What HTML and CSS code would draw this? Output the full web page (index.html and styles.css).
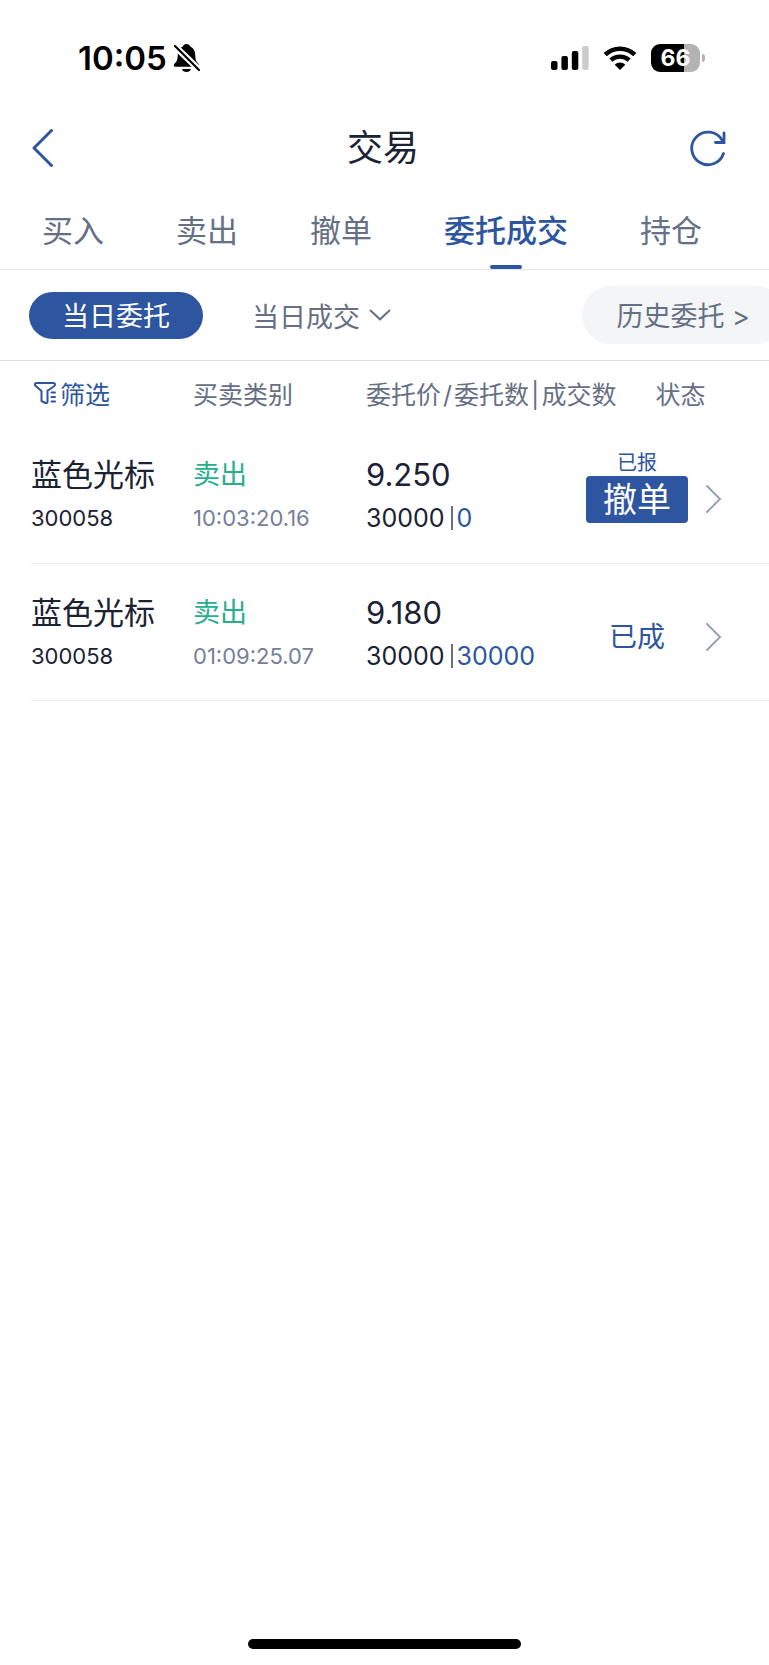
FILE: index.html
```html
<!DOCTYPE html>
<html lang="zh-CN">
<head>
  <meta charset="UTF-8" />
  <meta name="viewport" content="width=device-width, initial-scale=1.0" />
  <title>交易</title>
  <link rel="stylesheet" href="styles.css">
</head>
<body>
  <div class="status-bar">
    <div class="clock">
      <span>10:05</span>
      <svg width="28" height="30" viewBox="0 0 28 30">
        <path d="M13.500 1c-1.900 0-3.300 1-3.800 2.600C6.300 5 4.700 8.400 4.700 12.500c0 4.500-1.200 6.300-3 8-1.600 1.500-1.200 3.300.8 3.300h22c2 0 2.400-1.800.8-3.300-1.800-1.700-3-3.500-3-8 0-4.100-1.600-7.500-5-8.900C16.800 2 15.400 1 13.500 1z" />
        <path d="M9 26h9c-.5 2-2.200 3-4.500 3s-4-1-4.500-3z" />
        <path d="M0 1.500L27 27.500" stroke="#fff" stroke-width="6.500" />
        <path d="M2 3L26 27" stroke="#000" stroke-width="2.200" stroke-linecap="round" />
      </svg>
    </div>
    <div class="signals">
      <svg width="38" height="24" viewBox="0 0 38 24">
        <rect x="0" y="15" width="6.500" height="9" rx="2" />
        <rect x="10.400" y="10" width="6.500" height="14" rx="2" />
        <rect x="20.800" y="5" width="6.500" height="19" rx="2" />
        <rect x="31.200" y="0" width="6.500" height="24" rx="2" fill="#ccc" />
      </svg>
      <svg width="34" height="24" viewBox="0 0 34 24">
        <path d="M2.200 8.600a21.500 21.500 0 0 1 29.600 0" fill="none" stroke="#000" stroke-width="4.600" />
        <path d="M7.800 14.200a13.500 13.500 0 0 1 18.400 0" fill="none" stroke="#000" stroke-width="4.400" />
        <path d="M17 24l-5.300-5.300a7.800 7.800 0 0 1 10.600 0z" />
      </svg>
      <div class="battery"><span>66</span></div>
    </div>
  </div>

  <header class="nav">
    <button class="icon-btn" aria-label="返回">
      <svg width="22" height="38" viewBox="0 0 22 38">
        <path d="M19.500 1.500L2 19l17.500 17.500" fill="none" stroke="#2e559f" stroke-width="3" stroke-linecap="round" stroke-linejoin="round" />
      </svg>
    </button>
    <h1>交易</h1>
    <button class="icon-btn" aria-label="刷新">
      <svg width="36" height="38" viewBox="0 0 36 38">
        <path d="M33.500 24.500A16.300 16.300 0 1 1 32 11" fill="none" stroke="#2e559f" stroke-width="2.800" stroke-linecap="round" />
        <path d="M34 4v9.500h-8.500" fill="none" stroke="#2e559f" stroke-width="2.800" stroke-linecap="round" />
      </svg>
    </button>
  </header>

  <nav class="tabs">
    <a href="#">买入</a>
    <a href="#">卖出</a>
    <a href="#">撤单</a>
    <a href="#" class="active">委托成交</a>
    <a href="#">持仓</a>
  </nav>

  <div class="filters">
    <button class="pill">当日委托</button>
    <button class="drop">
      当日成交
      <svg width="22" height="12" viewBox="0 0 22 12">
        <path d="M1.500 1.500L11 10.300l9.500-8.800" fill="none" stroke="#667085" stroke-width="2" stroke-linecap="round" />
      </svg>
    </button>
    <button class="history">历史委托 &gt;</button>
  </div>

  <table class="orders">
    <colgroup>
      <col class="col-name">
      <col class="col-type">
      <col>
      <col class="col-status">
      <col class="col-arrow">
    </colgroup>
    <thead>
      <tr>
        <th>
          <button class="filter-btn">
            <svg width="24" height="24" viewBox="0 0 24 24" fill="none" stroke="#2e559f" stroke-width="2" stroke-linecap="round" stroke-linejoin="round">
              <path d="M15 9.500L21.300 5C22.600 3.700 22.200 2 20.500 2h-17C1.800 2 1.400 3.700 2.700 5L8.500 10v10l4 2c1 .3 2-.3 2-1.300V9.500" />
              <path d="M18.500 11.500h3.500M18.500 16h3.500M18.500 20.500h3.500" />
            </svg>
            筛选
          </button>
        </th>
        <th>买卖类别</th>
        <th>委托价<i>/</i>委托数<i>|</i>成交数</th>
        <th colspan="2" class="state">状态</th>
      </tr>
    </thead>
    <tbody>
      <tr>
        <td><div class="name">蓝色光标</div><div class="code">300058</div></td>
        <td><div class="side">卖出</div><div class="time">10:03:20.16</div></td>
        <td><div class="price">9.250</div><div class="qty">30000<i></i><b>0</b></div></td>
        <td class="status">
          <div class="pending">已报</div>
          <button class="cancel">撤单</button>
        </td>
        <td class="arrow">
          <svg width="18" height="30" viewBox="0 0 18 30">
            <path d="M1 2l13 13L1 28" fill="none" stroke="#98a1b3" stroke-width="2" stroke-linecap="round" />
          </svg>
        </td>
      </tr>
      <tr>
        <td><div class="name">蓝色光标</div><div class="code">300058</div></td>
        <td><div class="side">卖出</div><div class="time">01:09:25.07</div></td>
        <td><div class="price">9.180</div><div class="qty">30000<i></i><b>30000</b></div></td>
        <td class="status"><div class="done">已成</div></td>
        <td class="arrow">
          <svg width="18" height="30" viewBox="0 0 18 30">
            <path d="M1 2l13 13L1 28" fill="none" stroke="#98a1b3" stroke-width="2" stroke-linecap="round" />
          </svg>
        </td>
      </tr>
    </tbody>
  </table>

  <div class="home-bar"></div>
</body>
</html>
```
FILE: styles.css
```css
* {
  box-sizing: border-box;
}
body {
  margin: 0;
  min-height: 100vh;
  display: flex;
  flex-direction: column;
  background: #fff;
  color: #1b2233;
  font-family: Inter, 'Noto Sans CJK SC', sans-serif;
  overflow-x: hidden;
}
button {
  padding: 0;
  border: none;
  background: none;
  color: inherit;
  font: inherit;
  cursor: pointer;
}
svg {
  display: block;
  flex: none;
}

/* phone status bar */
.status-bar {
  display: flex;
  justify-content: space-between;
  align-items: center;
  height: 102px;
  padding: 13px 69px 0 78px;
  color: #000;
}
.clock {
  display: flex;
  align-items: center;
  gap: 6px;
  font-size: 33px;
  font-weight: 600;
}
.signals {
  display: flex;
  align-items: center;
  gap: 14px;
}
.battery {
  position: relative;
  width: 49px;
  height: 28px;
  border-radius: 9px;
  background: linear-gradient(to right, #000 67%, #b3b3b3 67%);
  color: #fff;
  font-size: 23px;
  font-weight: 700;
  line-height: 28px;
  text-align: center;
}
.battery::after {
  content: "";
  position: absolute;
  right: -5px;
  top: 10px;
  width: 3px;
  height: 8px;
  border-radius: 0 3px 3px 0;
  background: #b3b3b3;
}

/* title bar */
.nav {
  display: grid;
  grid-template-columns: 1fr auto 1fr;
  align-items: center;
  height: 90px;
  padding: 2px 35px 0 32px;
}
.nav h1 {
  margin: 0;
  padding-bottom: 6px;
  font-size: 36px;
  font-weight: 400;
}
.icon-btn {
  justify-self: start;
}
.icon-btn:last-child {
  justify-self: end;
  margin-right: 8px;
}

.tabs {
  display: flex;
  gap: 72px;
  padding: 0 42px;
  border-bottom: 1px solid #e6e8ec;
  line-height: 77px;
}
.tabs a {
  position: relative;
  color: #667085;
  font-size: 31px;
  text-decoration: none;
  white-space: nowrap;
}
.tabs .active {
  color: #2e559f;
  font-weight: 500;
}
.tabs .active::after {
  content: "";
  position: absolute;
  left: 50%;
  bottom: 0;
  width: 32px;
  height: 4px;
  margin-left: -16px;
  border-radius: 2px;
  background: #2e559f;
}

.filters {
  display: flex;
  align-items: center;
  height: 91px;
  padding-left: 29px;
  border-bottom: 1px solid #dcdfe6;
  color: #667085;
  font-size: 27px;
  white-space: nowrap;
  overflow: hidden;
}
.filters .pill {
  height: 47px;
  padding: 0 33px 2px;
  border-radius: 24px;
  background: #2e559f;
  color: #fff;
}
.drop {
  display: flex;
  align-items: center;
  gap: 9px;
  margin-left: 49px;
}
.filters .history {
  height: 58px;
  margin: 0 -16px 0 auto;
  padding: 0 35px 2px;
  border-radius: 29px;
  background: #f3f5f7;
}

/* order list */
.orders {
  width: calc(100% - 31px);
  margin-left: 31px;
  border-collapse: collapse;
  table-layout: fixed;
}
.col-name {
  width: 162px;
}
.col-type {
  width: 173px;
}
.col-status {
  width: 102px;
}
.col-arrow {
  width: 81px;
}
.orders th {
  height: 65px;
  padding: 0 0 2px;
  color: #667085;
  font-size: 25px;
  font-weight: 400;
  text-align: left;
  white-space: nowrap;
}
.orders th i {
  padding: 0 2px;
  font-style: normal;
}
.orders .state {
  padding-left: 6px;
  text-align: center;
}
.filter-btn {
  display: flex;
  align-items: center;
  gap: 3px;
  padding-left: 2px;
  color: #2e559f;
}
.orders td {
  height: 137px;
  padding: 27px 0 0;
  border-bottom: 1px solid #e8eaef;
  vertical-align: top;
}
.name, .side, .price {
  height: 44px;
  line-height: 44px;
}
.code, .time, .qty {
  height: 42px;
  line-height: 42px;
}
.name {
  font-size: 31px;
}
.side {
  color: #27ae8f;
  font-size: 27px;
}
.code, .time {
  font-size: 22px;
}
.time {
  color: #75809a;
}
.price {
  font-size: 31px;
}
.qty {
  display: flex;
  align-items: center;
  font-size: 25px;
}
.qty i {
  width: 2px;
  height: 24px;
  margin: 0 4px 0 6px;
  background: #667085;
}
.qty b {
  color: #2e559f;
  font-weight: 400;
}
.orders .status {
  padding-top: 50px;
  color: #2e559f;
  text-align: center;
}
.pending {
  height: 26px;
  margin-top: -26px;
  font-size: 20px;
  line-height: 26px;
}
.cancel {
  display: block;
  width: 100%;
  height: 47px;
  border-radius: 4px;
  background: #2e559f;
  color: #fff;
  font-size: 34px;
  line-height: 47px;
}
.done {
  font-size: 28px;
  line-height: 47px;
}
.orders .arrow {
  padding: 58px 0 0 18px;
}

.home-bar {
  width: 273px;
  height: 10px;
  margin: auto auto 16px;
  border-radius: 5px;
  background: #000;
}
```
